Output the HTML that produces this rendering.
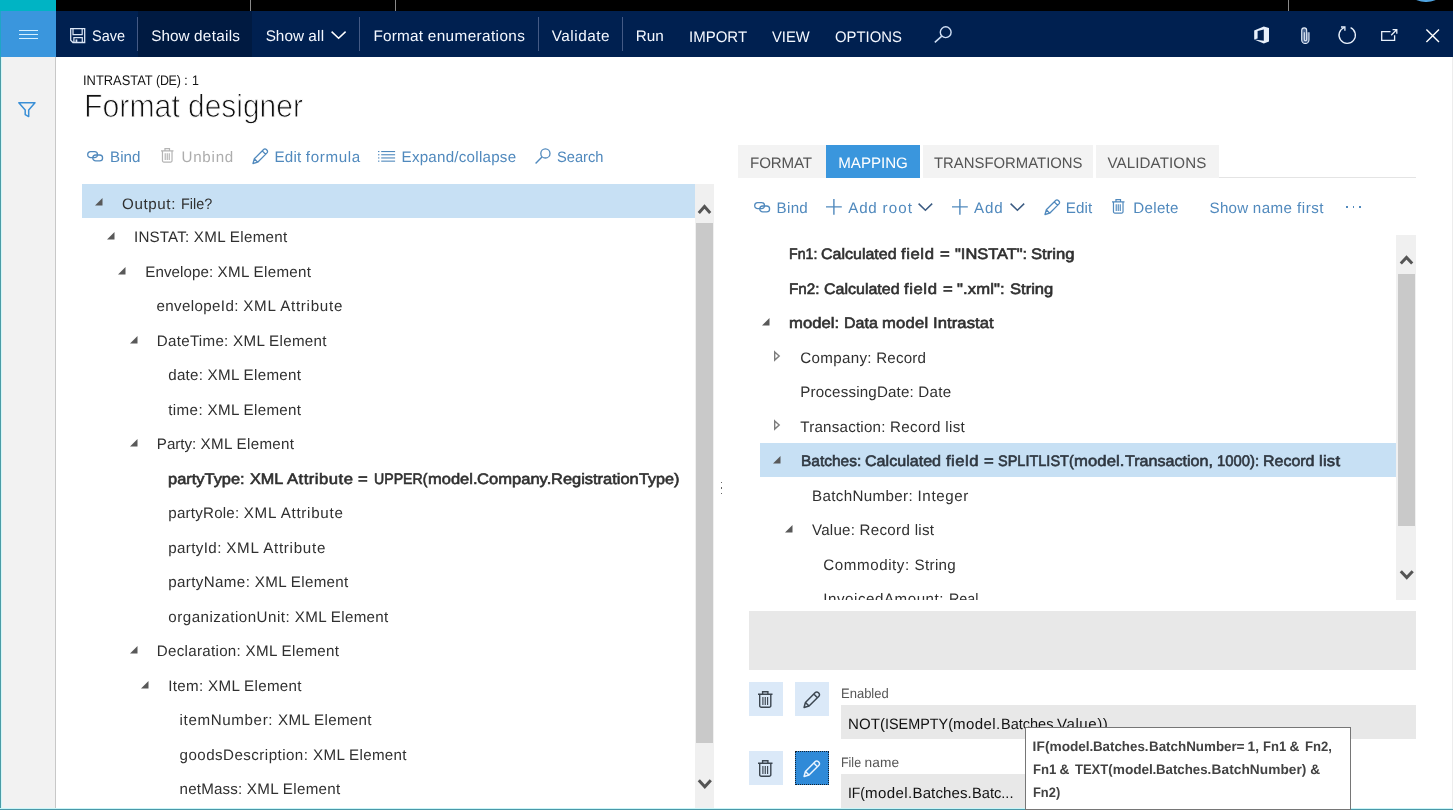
<!DOCTYPE html>
<html><head><meta charset="utf-8"><title>Format designer</title><style>
html,body{margin:0;padding:0;background:#fff;}
body{width:1453px;height:810px;position:relative;overflow:hidden;font-family:"Liberation Sans", sans-serif;}
.t{position:absolute;white-space:pre;text-rendering:geometricPrecision;}
.b{position:absolute;}
svg{position:absolute;overflow:visible;}
</style></head><body>
<div id="app" style="position:absolute;left:0;top:0;width:1453px;height:810px;will-change:transform;">
<div class="b" style="left:0px;top:0px;width:1453px;height:11px;background:#000;"></div>
<div class="b" style="left:0px;top:0px;width:56px;height:11px;background:#00b4c4;"></div>
<div class="b" style="left:250px;top:0px;width:1px;height:11px;background:#8a8a8a;"></div>
<div class="b" style="left:394.5px;top:0px;width:1px;height:11px;background:#8a8a8a;"></div>
<div class="b" style="left:1287.6px;top:0px;width:1px;height:11px;background:#8a8a8a;"></div>
<div class="b" style="left:1403.4px;top:-43.2px;width:45.2px;height:45.2px;border-radius:50%;background:#4fa3e0;"></div>
<div class="b" style="left:56px;top:11px;width:1397px;height:45.5px;background:#002050;"></div>
<div class="b" style="left:138px;top:11px;width:114px;height:45.5px;background:#001a41;"></div>
<div class="b" style="left:0px;top:11px;width:56px;height:45.5px;background:#3a96dd;"></div>
<div class="b" style="left:0px;top:56.5px;width:56px;height:754px;background:#f2f2f2;"></div>
<div class="b" style="left:55px;top:56.5px;width:1px;height:754px;background:#c8c8c8;"></div>
<div class="b" style="left:0px;top:11px;width:1px;height:45.5px;background:#1fa6c6;"></div>
<div class="b" style="left:0px;top:56.5px;width:1px;height:754px;background:#4b9ca6;"></div>
<div class="b" style="left:1px;top:56.5px;width:1.3px;height:754px;background:#d3f7f9;"></div>
<div class="b" style="left:1451.5px;top:56.5px;width:1px;height:752px;background:#ededed;"></div>
<div class="b" style="left:19px;top:30px;width:19px;height:1.2px;background:#d6f0ff;"></div>
<div class="b" style="left:19px;top:34px;width:19px;height:1.2px;background:#d6f0ff;"></div>
<div class="b" style="left:19px;top:38px;width:19px;height:1.2px;background:#d6f0ff;"></div>
<div class="b" style="left:137.2px;top:17px;width:1.2px;height:34px;background:#445a85;"></div>
<div class="b" style="left:359.3px;top:17px;width:1.2px;height:34px;background:#445a85;"></div>
<div class="b" style="left:538px;top:17px;width:1.2px;height:34px;background:#445a85;"></div>
<div class="b" style="left:622px;top:17px;width:1.2px;height:34px;background:#445a85;"></div>
<svg style="left:70px;top:27.6px;" width="15.4" height="15.2" viewBox="0 0 15.4 15.2"><path d="M0.7 0.7H14.7V14.5H2.9L0.7 12.3Z" fill="none" stroke="#dbe6f6" stroke-width="1.3"/>
<path d="M3 0.7V6.6H12.2V0.7" fill="none" stroke="#dbe6f6" stroke-width="1.2"/>
<path d="M3.9 14.5V9.6H12.3V14.5" fill="none" stroke="#dbe6f6" stroke-width="1.2"/>
<rect x="5.6" y="11.4" width="1.7" height="2.6" fill="#dbe6f6"/></svg>
<svg style="left:331px;top:31px;" width="15.3" height="8" viewBox="0 0 15.3 8"><path d="M0.6 0.6l7 6.6l7-6.6" fill="none" stroke="#fff" stroke-width="1.5"/></svg>
<svg style="left:934px;top:26px;" width="18" height="17" viewBox="0 0 18 17"><circle cx="11.7" cy="6.2" r="5.4" fill="none" stroke="#cfdff5" stroke-width="1.4"/><path d="M7.8 10.1L0.8 16.4" stroke="#cfdff5" stroke-width="1.5"/></svg>
<svg style="left:1254.2px;top:26.4px;" width="15" height="17.6" viewBox="0 0 15 17.6"><path d="M0.2 4.4L9.8 0.6L15 2V15.6L9.8 17.4L0.2 13.6L9.8 14.8V3.4L3.6 5V12.4L0.2 13.6Z" fill="#e8f0fb"/></svg>
<svg style="left:1300.6px;top:26.8px;" width="8.7" height="17.2" viewBox="0 0 8.7 17.2"><g transform="translate(8.7 0) scale(-1 1)"><path d="M0.7 5.2V12.9a3.65 3.65 0 0 0 7.3 0V3.4a2.5 2.5 0 0 0-5 0V12.6a1.2 1.2 0 0 0 2.4 0V5.2" fill="#8fa6c8" fill-opacity="0.55" stroke="#e8f0fb" stroke-width="1.1"/></g></svg>
<svg style="left:1337.8px;top:26.4px;" width="18.2" height="17.6" viewBox="0 0 18.2 17.6"><path d="M12.6 1.7A8.2 8.2 0 1 1 6.3 1.5" fill="none" stroke="#e8f0fb" stroke-width="1.3"/><path d="M3 1H6.9V4.7" fill="none" stroke="#e8f0fb" stroke-width="1.3"/></svg>
<svg style="left:1380.8px;top:28.9px;" width="16.5" height="12" viewBox="0 0 16.5 12"><path d="M9.5 2.7H0.7V11.3H13.6V6.3" fill="none" stroke="#e8f0fb" stroke-width="1.3"/><path d="M10.2 6.2L15.6 0.8M11.6 0.7H15.8V4.8" fill="none" stroke="#e8f0fb" stroke-width="1.3"/></svg>
<svg style="left:1425.6px;top:28.9px;" width="13.4" height="13.4" viewBox="0 0 13.4 13.4"><path d="M0.4 0.4L13 13M13 0.4L0.4 13" stroke="#fff" stroke-width="1.4"/></svg>
<svg style="left:18px;top:101.8px;" width="17.8" height="15.4" viewBox="0 0 17.8 15.4"><path d="M0.8 0.8H17L10.7 8V14.6L7.2 12.6V8Z" fill="none" stroke="#3a8fd6" stroke-width="1.5" stroke-linejoin="round"/></svg>
<svg style="left:86.5px;top:150.7px;" width="16.3" height="10.6" viewBox="0 0 16.3 10.6"><rect x="0.7" y="0.7" width="9.8" height="5.9" rx="2.95" fill="none" stroke="#5089bd" stroke-width="1.3"/><rect x="5.8" y="4" width="9.8" height="5.9" rx="2.95" fill="none" stroke="#5089bd" stroke-width="1.3"/></svg>
<svg style="left:161px;top:148.4px;" width="12.499" height="14.654" viewBox="0 0 12.499 14.654"><g transform="scale(0.862)"><path d="M0 3.3H14.5M4.6 3.1V0.8H9.9V3.1M1.7 3.5V14.7a1.6 1.6 0 0 0 1.6 1.6H11.2a1.6 1.6 0 0 0 1.6-1.6V3.5" fill="none" stroke="#b4b4b4" stroke-width="1.3921113689095128"/><path d="M4.9 6V14M7.25 6V14M9.6 6V14" stroke="#b4b4b4" stroke-width="1.334106728538283"/></g></svg>
<svg style="left:251.9px;top:147.8px;" width="16.5" height="16.5" viewBox="0 0 16.5 16.5"><g transform="scale(1.0)"><path d="M1 15.5L2.3 10.8L11.6 1.5a1.9 1.9 0 0 1 2.7 0l0.7 0.7a1.9 1.9 0 0 1 0 2.7L5.7 14.2Z M2.3 10.8L5.7 14.2 M10.2 2.9L13.6 6.3" fill="none" stroke="#5089bd" stroke-width="1.3" stroke-linejoin="round"/></g></svg>
<svg style="left:377.9px;top:150.5px;" width="17.1" height="11" viewBox="0 0 17.1 11"><rect x="0" y="0" width="1.4" height="1.1" fill="#5089bd"/><rect x="3.2" y="0" width="13.9" height="1.1" fill="#5089bd"/><rect x="0" y="3.2" width="1.4" height="1.1" fill="#5089bd"/><rect x="3.2" y="3.2" width="13.9" height="1.1" fill="#5089bd"/><rect x="0" y="6.4" width="1.4" height="1.1" fill="#5089bd"/><rect x="3.2" y="6.4" width="13.9" height="1.1" fill="#5089bd"/><rect x="0" y="9.6" width="1.4" height="1.1" fill="#5089bd"/><rect x="3.2" y="9.6" width="13.9" height="1.1" fill="#5089bd"/></svg>
<svg style="left:534.8px;top:147.8px;" width="16" height="16" viewBox="0 0 16 16"><circle cx="10.4" cy="5.4" r="4.6" fill="none" stroke="#5089bd" stroke-width="1.3"/><path d="M7.2 8.8L0.6 15.4" stroke="#5089bd" stroke-width="1.4"/></svg>
<div class="b" style="left:82px;top:184px;width:613.2px;height:33.6px;background:#c7e0f4;"></div>
<div class="b" style="left:695.2px;top:184px;width:18.8px;height:624px;background:#f0f0f0;"></div>
<div class="b" style="left:696.2px;top:223px;width:17px;height:520px;background:#c9c9c9;"></div>
<svg style="left:698px;top:203.5px;" width="13" height="10" viewBox="0 0 13 10"><path d="M0.8 9L6.5 2.6L12.2 9" fill="none" stroke="#555" stroke-width="3" stroke-linejoin="miter"/></svg>
<svg style="left:697.8px;top:778.7px;" width="13.6" height="10.3" viewBox="0 0 13.6 10.3"><path d="M0.8 1.2L6.8 7.8L12.8 1.2" fill="none" stroke="#555" stroke-width="3"/></svg>
<div class="b" style="left:720.6px;top:481.8px;width:1.5px;height:1.5px;background:#666;"></div>
<div class="b" style="left:720.6px;top:487.3px;width:1.5px;height:1.5px;background:#666;"></div>
<div class="b" style="left:720.6px;top:492.8px;width:1.5px;height:1.5px;background:#666;"></div>
<div class="b" style="left:738px;top:145px;width:87.5px;height:32.5px;background:#f3f3f3;"></div>
<div class="b" style="left:826.2px;top:145px;width:93.8px;height:32.5px;background:#3a96dd;"></div>
<div class="b" style="left:923px;top:145px;width:170.3px;height:32.5px;background:#f3f3f3;"></div>
<div class="b" style="left:1096px;top:145px;width:122.5px;height:32.5px;background:#f3f3f3;"></div>
<div class="b" style="left:1218.5px;top:176.5px;width:197.7px;height:1px;background:#e4e4e4;"></div>
<svg style="left:753.5px;top:201.6px;" width="16.3" height="10.6" viewBox="0 0 16.3 10.6"><rect x="0.7" y="0.7" width="9.8" height="5.9" rx="2.95" fill="none" stroke="#5089bd" stroke-width="1.3"/><rect x="5.8" y="4" width="9.8" height="5.9" rx="2.95" fill="none" stroke="#5089bd" stroke-width="1.3"/></svg>
<svg style="left:826.2px;top:198.6px;" width="15.8" height="15.8" viewBox="0 0 15.8 15.8"><path d="M7.9 0V15.8M0 7.9H15.8" stroke="#5089bd" stroke-width="1.4"/></svg>
<svg style="left:918.2px;top:202.5px;" width="14.8" height="8.3" viewBox="0 0 14.8 8.3"><path d="M0.6 0.6L7.4 7.2L14.2 0.6" fill="none" stroke="#3b5b82" stroke-width="1.5"/></svg>
<svg style="left:952.4px;top:198.6px;" width="15.8" height="15.8" viewBox="0 0 15.8 15.8"><path d="M7.9 0V15.8M0 7.9H15.8" stroke="#5089bd" stroke-width="1.4"/></svg>
<svg style="left:1010px;top:202.5px;" width="14.8" height="8.3" viewBox="0 0 14.8 8.3"><path d="M0.6 0.6L7.4 7.2L14.2 0.6" fill="none" stroke="#3b5b82" stroke-width="1.5"/></svg>
<svg style="left:1043.7px;top:198.6px;" width="16.5" height="16.5" viewBox="0 0 16.5 16.5"><g transform="scale(1.0)"><path d="M1 15.5L2.3 10.8L11.6 1.5a1.9 1.9 0 0 1 2.7 0l0.7 0.7a1.9 1.9 0 0 1 0 2.7L5.7 14.2Z M2.3 10.8L5.7 14.2 M10.2 2.9L13.6 6.3" fill="none" stroke="#5089bd" stroke-width="1.3" stroke-linejoin="round"/></g></svg>
<svg style="left:1112px;top:199.2px;" width="12.499" height="14.654" viewBox="0 0 12.499 14.654"><g transform="scale(0.862)"><path d="M0 3.3H14.5M4.6 3.1V0.8H9.9V3.1M1.7 3.5V14.7a1.6 1.6 0 0 0 1.6 1.6H11.2a1.6 1.6 0 0 0 1.6-1.6V3.5" fill="none" stroke="#5089bd" stroke-width="1.3921113689095128"/><path d="M4.9 6V14M7.25 6V14M9.6 6V14" stroke="#5089bd" stroke-width="1.334106728538283"/></g></svg>
<div class="b" style="left:1346.0px;top:206px;width:1.8px;height:1.8px;background:#5089bd;"></div>
<div class="b" style="left:1352.6px;top:206px;width:1.8px;height:1.8px;background:#5089bd;"></div>
<div class="b" style="left:1359.2px;top:206px;width:1.8px;height:1.8px;background:#5089bd;"></div>
<div class="b" style="left:749px;top:235px;width:647.3px;height:365px;overflow:hidden;">
<div class="b" style="left:11px;top:207.5px;width:637px;height:34px;background:#c7e0f4;"></div>
<span class="t" style="left:40.05px;top:10.00px;font-size:15.15px;line-height:20px;color:#303030;-webkit-text-stroke:0.6px currentColor;transform:scaleX(0.9344);transform-origin:0 0;">Fn1: </span>
<span class="t" style="left:72.30px;top:10.00px;font-size:15.15px;line-height:20px;color:#303030;-webkit-text-stroke:0.6px currentColor;transform:scaleX(1.0561);transform-origin:0 0;">Calculated </span>
<span class="t" style="left:152.30px;top:10.00px;font-size:15.15px;line-height:20px;color:#303030;letter-spacing:0.540px;-webkit-text-stroke:0.6px currentColor;transform:scaleX(1.1000);transform-origin:0 0;">field </span>
<span class="t" style="left:191.05px;top:10.00px;font-size:15.15px;line-height:20px;color:#303030;letter-spacing:0.060px;-webkit-text-stroke:0.6px currentColor;transform:scaleX(1.1000);transform-origin:0 0;">= </span>
<span class="t" style="left:205.55px;top:10.00px;font-size:15.15px;line-height:20px;color:#303030;-webkit-text-stroke:0.6px currentColor;transform:scaleX(1.0848);transform-origin:0 0;">"INSTAT": </span>
<span class="t" style="left:282.30px;top:10.00px;font-size:15.15px;line-height:20px;color:#303030;-webkit-text-stroke:0.6px currentColor;transform:scaleX(1.0997);transform-origin:0 0;">String</span>
<span class="t" style="left:40.05px;top:45.00px;font-size:15.15px;line-height:20px;color:#303030;-webkit-text-stroke:0.6px currentColor;transform:scaleX(1.0068);transform-origin:0 0;">Fn2: </span>
<span class="t" style="left:74.80px;top:45.00px;font-size:15.15px;line-height:20px;color:#303030;-webkit-text-stroke:0.6px currentColor;transform:scaleX(1.0561);transform-origin:0 0;">Calculated </span>
<span class="t" style="left:154.80px;top:45.00px;font-size:15.15px;line-height:20px;color:#303030;letter-spacing:0.540px;-webkit-text-stroke:0.6px currentColor;transform:scaleX(1.1000);transform-origin:0 0;">field </span>
<span class="t" style="left:193.55px;top:45.00px;font-size:15.15px;line-height:20px;color:#303030;letter-spacing:0.060px;-webkit-text-stroke:0.6px currentColor;transform:scaleX(1.1000);transform-origin:0 0;">= </span>
<span class="t" style="left:208.05px;top:45.00px;font-size:15.15px;line-height:20px;color:#303030;letter-spacing:0.101px;-webkit-text-stroke:0.6px currentColor;transform:scaleX(1.1000);transform-origin:0 0;">".xml": </span>
<span class="t" style="left:260.55px;top:45.00px;font-size:15.15px;line-height:20px;color:#303030;letter-spacing:-0.000px;-webkit-text-stroke:0.6px currentColor;transform:scaleX(1.0934);transform-origin:0 0;">String</span>
<span class="t" style="left:40.05px;top:79.00px;font-size:15.15px;line-height:20px;color:#303030;letter-spacing:0.017px;-webkit-text-stroke:0.6px currentColor;transform:scaleX(1.1000);transform-origin:0 0;">model: </span>
<span class="t" style="left:94.80px;top:79.00px;font-size:15.15px;line-height:20px;color:#303030;-webkit-text-stroke:0.6px currentColor;transform:scaleX(1.0565);transform-origin:0 0;">Data </span>
<span class="t" style="left:133.05px;top:79.00px;font-size:15.15px;line-height:20px;color:#303030;letter-spacing:0.190px;-webkit-text-stroke:0.6px currentColor;transform:scaleX(1.1000);transform-origin:0 0;">model </span>
<span class="t" style="left:184.30px;top:79.00px;font-size:15.15px;line-height:20px;color:#303030;letter-spacing:0.066px;-webkit-text-stroke:0.6px currentColor;transform:scaleX(1.1000);transform-origin:0 0;">Intrastat</span>
<span class="t" style="left:51.30px;top:114.00px;font-size:15.15px;line-height:20px;color:#303030;letter-spacing:0.309px;">Company: </span>
<span class="t" style="left:127.30px;top:114.00px;font-size:15.15px;line-height:20px;color:#303030;letter-spacing:0.139px;">Record</span>
<span class="t" style="left:51.30px;top:148.00px;font-size:15.15px;line-height:20px;color:#303030;letter-spacing:0.169px;">ProcessingDate: </span>
<span class="t" style="left:169.30px;top:148.00px;font-size:15.15px;line-height:20px;color:#303030;letter-spacing:0.258px;">Date</span>
<span class="t" style="left:51.30px;top:183.00px;font-size:15.15px;line-height:20px;color:#303030;letter-spacing:0.214px;">Transaction: </span>
<span class="t" style="left:141.05px;top:183.00px;font-size:15.15px;line-height:20px;color:#303030;letter-spacing:0.323px;">Record list</span>
<span class="t" style="left:51.80px;top:217.00px;font-size:15.15px;line-height:20px;color:#2f3740;-webkit-text-stroke:0.6px currentColor;transform:scaleX(1.0218);transform-origin:0 0;">Batches: </span>
<span class="t" style="left:116.30px;top:217.00px;font-size:15.15px;line-height:20px;color:#2f3740;-webkit-text-stroke:0.6px currentColor;transform:scaleX(1.0627);transform-origin:0 0;">Calculated </span>
<span class="t" style="left:196.80px;top:217.00px;font-size:15.15px;line-height:20px;color:#2f3740;letter-spacing:0.427px;-webkit-text-stroke:0.6px currentColor;transform:scaleX(1.1000);transform-origin:0 0;">field </span>
<span class="t" style="left:234.80px;top:217.00px;font-size:15.15px;line-height:20px;color:#2f3740;letter-spacing:0.060px;-webkit-text-stroke:0.6px currentColor;transform:scaleX(1.1000);transform-origin:0 0;">= </span>
<span class="t" style="left:249.30px;top:217.00px;font-size:15.15px;line-height:20px;color:#2f3740;-webkit-text-stroke:0.6px currentColor;transform:scaleX(0.9577);transform-origin:0 0;">SPLITLIST(</span>
<span class="t" style="left:325.05px;top:217.00px;font-size:15.15px;line-height:20px;color:#2f3740;letter-spacing:0.076px;-webkit-text-stroke:0.6px currentColor;transform:scaleX(1.1000);transform-origin:0 0;">model.</span>
<span class="t" style="left:375.55px;top:217.00px;font-size:15.15px;line-height:20px;color:#2f3740;letter-spacing:-0.000px;-webkit-text-stroke:0.6px currentColor;transform:scaleX(1.0636);transform-origin:0 0;">Transaction, </span>
<span class="t" style="left:468.05px;top:217.00px;font-size:15.15px;line-height:20px;color:#2f3740;-webkit-text-stroke:0.6px currentColor;transform:scaleX(0.9811);transform-origin:0 0;">1000): </span>
<span class="t" style="left:514.30px;top:217.00px;font-size:15.15px;line-height:20px;color:#2f3740;-webkit-text-stroke:0.6px currentColor;transform:scaleX(1.0553);transform-origin:0 0;">Record </span>
<span class="t" style="left:570.25px;top:217.00px;font-size:15.15px;line-height:20px;color:#2f3740;letter-spacing:0.209px;-webkit-text-stroke:0.6px currentColor;transform:scaleX(1.1000);transform-origin:0 0;">list</span>
<span class="t" style="left:63.05px;top:252.00px;font-size:15.15px;line-height:20px;color:#303030;letter-spacing:0.347px;">BatchNumber: </span>
<span class="t" style="left:168.55px;top:252.00px;font-size:15.15px;line-height:20px;color:#303030;letter-spacing:0.603px;">Integer</span>
<span class="t" style="left:63.05px;top:286.00px;font-size:15.15px;line-height:20px;color:#303030;letter-spacing:0.212px;">Value: </span>
<span class="t" style="left:110.55px;top:286.00px;font-size:15.15px;line-height:20px;color:#303030;letter-spacing:0.298px;">Record list</span>
<span class="t" style="left:74.30px;top:321.00px;font-size:15.15px;line-height:20px;color:#303030;letter-spacing:0.570px;">Commodity: </span>
<span class="t" style="left:165.55px;top:321.00px;font-size:15.15px;line-height:20px;color:#303030;letter-spacing:0.339px;">String</span>
<span class="t" style="left:74.30px;top:355.00px;font-size:15.15px;line-height:20px;color:#303030;letter-spacing:0.531px;">InvoicedAmount: </span>
<span class="t" style="left:199.80px;top:355.00px;font-size:15.15px;line-height:20px;color:#303030;transform:scaleX(0.9476);transform-origin:0 0;">Real</span>
</div>
<div class="b" style="left:1396.2px;top:235px;width:20px;height:365px;background:#f0f0f0;"></div>
<div class="b" style="left:1398.2px;top:274px;width:17.3px;height:252.3px;background:#c9c9c9;"></div>
<svg style="left:1399.6px;top:254.8px;" width="13" height="9.6" viewBox="0 0 13 9.6"><path d="M0.8 8.6L6.5 2.4L12.2 8.6" fill="none" stroke="#555" stroke-width="3"/></svg>
<svg style="left:1399.5px;top:570px;" width="13.5" height="10" viewBox="0 0 13.5 10"><path d="M0.8 1.2L6.75 7.6L12.7 1.2" fill="none" stroke="#555" stroke-width="3"/></svg>
<svg style="left:95.2px;top:198.0px;" width="7.5" height="7.5" viewBox="0 0 7.5 7.5"><path d="M7.5 0V7.5H0Z" fill="#595959"/></svg>
<svg style="left:107.2px;top:232.0px;" width="7.5" height="7.5" viewBox="0 0 7.5 7.5"><path d="M7.5 0V7.5H0Z" fill="#595959"/></svg>
<svg style="left:118.45px;top:267.0px;" width="7.5" height="7.5" viewBox="0 0 7.5 7.5"><path d="M7.5 0V7.5H0Z" fill="#595959"/></svg>
<svg style="left:129.95px;top:336.0px;" width="7.5" height="7.5" viewBox="0 0 7.5 7.5"><path d="M7.5 0V7.5H0Z" fill="#595959"/></svg>
<svg style="left:129.95px;top:439.0px;" width="7.5" height="7.5" viewBox="0 0 7.5 7.5"><path d="M7.5 0V7.5H0Z" fill="#595959"/></svg>
<svg style="left:129.95px;top:646.0px;" width="7.5" height="7.5" viewBox="0 0 7.5 7.5"><path d="M7.5 0V7.5H0Z" fill="#595959"/></svg>
<svg style="left:141.45px;top:681.0px;" width="7.5" height="7.5" viewBox="0 0 7.5 7.5"><path d="M7.5 0V7.5H0Z" fill="#595959"/></svg>
<svg style="left:762.2px;top:318.0px;" width="7.5" height="7.5" viewBox="0 0 7.5 7.5"><path d="M7.5 0V7.5H0Z" fill="#595959"/></svg>
<svg style="left:774.25px;top:350.9px;" width="6" height="10" viewBox="0 0 6 10"><path d="M0.7 0.9L5.2 5L0.7 9.1Z" fill="none" stroke="#7c7c7c" stroke-width="1.4"/></svg>
<svg style="left:774.25px;top:419.9px;" width="6" height="10" viewBox="0 0 6 10"><path d="M0.7 0.9L5.2 5L0.7 9.1Z" fill="none" stroke="#7c7c7c" stroke-width="1.4"/></svg>
<svg style="left:773.45px;top:456.0px;" width="7.5" height="7.5" viewBox="0 0 7.5 7.5"><path d="M7.5 0V7.5H0Z" fill="#595959"/></svg>
<svg style="left:785.2px;top:525.0px;" width="7.5" height="7.5" viewBox="0 0 7.5 7.5"><path d="M7.5 0V7.5H0Z" fill="#595959"/></svg>
<div class="b" style="left:749px;top:611px;width:667.3px;height:58.6px;background:#e8e8e8;"></div>
<div class="b" style="left:749px;top:682px;width:34px;height:34px;background:#dbe9f8;"></div>
<div class="b" style="left:795px;top:682px;width:34px;height:34px;background:#dbe9f8;"></div>
<div class="b" style="left:749px;top:751px;width:34px;height:34px;background:#dbe9f8;"></div>
<div class="b" style="left:795px;top:751px;width:34px;height:34px;background:#2f8ad8;outline:1px dotted #123;outline-offset:-1px;"></div>
<svg style="left:757.9px;top:690.9px;" width="14.5" height="17.0" viewBox="0 0 14.5 17.0"><g transform="scale(1.0)"><path d="M0 3.3H14.5M4.6 3.1V0.8H9.9V3.1M1.7 3.5V14.7a1.6 1.6 0 0 0 1.6 1.6H11.2a1.6 1.6 0 0 0 1.6-1.6V3.5" fill="none" stroke="#3c4650" stroke-width="1.4"/><path d="M4.9 6V14M7.25 6V14M9.6 6V14" stroke="#3c4650" stroke-width="1.15"/></g></svg>
<svg style="left:802.9px;top:690.8px;" width="17.490000000000002" height="17.490000000000002" viewBox="0 0 17.490000000000002 17.490000000000002"><g transform="scale(1.06)"><path d="M1 15.5L2.3 10.8L11.6 1.5a1.9 1.9 0 0 1 2.7 0l0.7 0.7a1.9 1.9 0 0 1 0 2.7L5.7 14.2Z M2.3 10.8L5.7 14.2 M10.2 2.9L13.6 6.3" fill="none" stroke="#3c4650" stroke-width="1.4150943396226414" stroke-linejoin="round"/></g></svg>
<svg style="left:757.9px;top:759.9px;" width="14.5" height="17.0" viewBox="0 0 14.5 17.0"><g transform="scale(1.0)"><path d="M0 3.3H14.5M4.6 3.1V0.8H9.9V3.1M1.7 3.5V14.7a1.6 1.6 0 0 0 1.6 1.6H11.2a1.6 1.6 0 0 0 1.6-1.6V3.5" fill="none" stroke="#3c4650" stroke-width="1.4"/><path d="M4.9 6V14M7.25 6V14M9.6 6V14" stroke="#3c4650" stroke-width="1.15"/></g></svg>
<svg style="left:802.9px;top:759.8px;" width="17.490000000000002" height="17.490000000000002" viewBox="0 0 17.490000000000002 17.490000000000002"><g transform="scale(1.06)"><path d="M1 15.5L2.3 10.8L11.6 1.5a1.9 1.9 0 0 1 2.7 0l0.7 0.7a1.9 1.9 0 0 1 0 2.7L5.7 14.2Z M2.3 10.8L5.7 14.2 M10.2 2.9L13.6 6.3" fill="none" stroke="#eaf4ff" stroke-width="1.4150943396226414" stroke-linejoin="round"/></g></svg>
<div class="b" style="left:841px;top:705px;width:575.3px;height:33.6px;background:#e8e8e8;"></div>
<div class="b" style="left:841px;top:774.3px;width:184.5px;height:34px;background:#e8e8e8;"></div>
<span class="t" style="left:91.74px;top:27.00px;font-size:15.3px;line-height:20px;color:#f4f8ff;transform:scaleX(0.9452);transform-origin:0 0;">Save</span>
<span class="t" style="left:151.14px;top:27.00px;font-size:15.3px;line-height:20px;color:#f4f8ff;letter-spacing:0.077px;">Show </span>
<span class="t" style="left:194.04px;top:27.00px;font-size:15.3px;line-height:20px;color:#f4f8ff;letter-spacing:0.291px;">details</span>
<span class="t" style="left:265.64px;top:27.00px;font-size:15.3px;line-height:20px;color:#f4f8ff;letter-spacing:0.037px;">Show </span>
<span class="t" style="left:308.34px;top:27.00px;font-size:15.3px;line-height:20px;color:#f4f8ff;letter-spacing:0.276px;">all</span>
<span class="t" style="left:373.54px;top:27.00px;font-size:15.3px;line-height:20px;color:#f4f8ff;letter-spacing:0.214px;">Format </span>
<span class="t" style="left:427.74px;top:27.00px;font-size:15.3px;line-height:20px;color:#f4f8ff;letter-spacing:0.407px;">enumerations</span>
<span class="t" style="left:551.74px;top:27.00px;font-size:15.3px;line-height:20px;color:#f4f8ff;letter-spacing:0.516px;">Validate</span>
<span class="t" style="left:635.74px;top:27.00px;font-size:15.3px;line-height:20px;color:#f4f8ff;letter-spacing:-0.049px;">Run</span>
<span class="t" style="left:688.54px;top:28.00px;font-size:15.3px;line-height:20px;color:#f4f8ff;transform:scaleX(0.9805);transform-origin:0 0;">IMPORT</span>
<span class="t" style="left:771.64px;top:28.00px;font-size:15.3px;line-height:20px;color:#f4f8ff;transform:scaleX(0.9635);transform-origin:0 0;">VIEW</span>
<span class="t" style="left:834.74px;top:28.00px;font-size:15.3px;line-height:20px;color:#f4f8ff;transform:scaleX(0.9713);transform-origin:0 0;">OPTIONS</span>
<span class="t" style="left:83.34px;top:71.00px;font-size:13.8px;line-height:20px;color:#151515;transform:scaleX(0.9337);transform-origin:0 0;">INTRASTAT </span>
<span class="t" style="left:156.34px;top:71.00px;font-size:13.8px;line-height:20px;color:#151515;letter-spacing:-0.274px;transform:scaleX(0.9000);transform-origin:0 0;">(DE) </span>
<span class="t" style="left:184.09px;top:71.00px;font-size:13.8px;line-height:20px;color:#151515;letter-spacing:0.164px;">: </span>
<span class="t" style="left:192.09px;top:71.00px;font-size:13.8px;line-height:20px;color:#151515;transform:scaleX(0.9000);transform-origin:0 0;">1</span>
<span class="t" style="left:83.53px;top:86.00px;font-size:32.5px;line-height:40px;color:#111;-webkit-text-stroke:0.9px #fff;transform:scaleX(0.9311);transform-origin:0 0;">Format </span>
<span class="t" style="left:187.78px;top:86.00px;font-size:32.5px;line-height:40px;color:#111;-webkit-text-stroke:0.9px #fff;transform:scaleX(0.9214);transform-origin:0 0;">designer</span>
<span class="t" style="left:110.05px;top:148.00px;font-size:15.15px;line-height:20px;color:#5089bd;letter-spacing:0.048px;">Bind</span>
<span class="t" style="left:181.55px;top:148.00px;font-size:15.15px;line-height:20px;color:#adadad;letter-spacing:0.735px;">Unbind</span>
<span class="t" style="left:274.55px;top:148.00px;font-size:15.15px;line-height:20px;color:#5089bd;letter-spacing:0.191px;">Edit </span>
<span class="t" style="left:305.80px;top:148.00px;font-size:15.15px;line-height:20px;color:#5089bd;letter-spacing:0.668px;">formula</span>
<span class="t" style="left:401.55px;top:148.00px;font-size:15.15px;line-height:20px;color:#5089bd;letter-spacing:0.243px;">Expand/collapse</span>
<span class="t" style="left:557.05px;top:148.00px;font-size:15.15px;line-height:20px;color:#5089bd;transform:scaleX(0.9692);transform-origin:0 0;">Search</span>
<span class="t" style="left:122.05px;top:195.00px;font-size:15.15px;line-height:20px;color:#303030;letter-spacing:0.609px;">Output: </span>
<span class="t" style="left:180.80px;top:195.00px;font-size:15.15px;line-height:20px;color:#303030;transform:scaleX(0.9522);transform-origin:0 0;">File?</span>
<span class="t" style="left:134.05px;top:228.00px;font-size:15.15px;line-height:20px;color:#303030;letter-spacing:0.178px;">INSTAT: </span>
<span class="t" style="left:193.80px;top:228.00px;font-size:15.15px;line-height:20px;color:#303030;letter-spacing:0.318px;">XML Element</span>
<span class="t" style="left:145.30px;top:263.00px;font-size:15.15px;line-height:20px;color:#303030;letter-spacing:0.069px;">Envelope: </span>
<span class="t" style="left:217.55px;top:263.00px;font-size:15.15px;line-height:20px;color:#303030;letter-spacing:0.318px;">XML Element</span>
<span class="t" style="left:156.55px;top:297.00px;font-size:15.15px;line-height:20px;color:#303030;letter-spacing:0.354px;">envelopeId: </span>
<span class="t" style="left:243.30px;top:297.00px;font-size:15.15px;line-height:20px;color:#303030;letter-spacing:0.723px;">XML Attribute</span>
<span class="t" style="left:156.80px;top:332.00px;font-size:15.15px;line-height:20px;color:#303030;letter-spacing:0.277px;">DateTime: </span>
<span class="t" style="left:233.05px;top:332.00px;font-size:15.15px;line-height:20px;color:#303030;letter-spacing:0.318px;">XML Element</span>
<span class="t" style="left:168.30px;top:366.00px;font-size:15.15px;line-height:20px;color:#303030;letter-spacing:0.227px;">date: </span>
<span class="t" style="left:207.55px;top:366.00px;font-size:15.15px;line-height:20px;color:#303030;letter-spacing:0.318px;">XML Element</span>
<span class="t" style="left:168.30px;top:401.00px;font-size:15.15px;line-height:20px;color:#303030;letter-spacing:0.370px;">time: </span>
<span class="t" style="left:207.55px;top:401.00px;font-size:15.15px;line-height:20px;color:#303030;letter-spacing:0.318px;">XML Element</span>
<span class="t" style="left:156.80px;top:435.00px;font-size:15.15px;line-height:20px;color:#303030;letter-spacing:-0.002px;">Party: </span>
<span class="t" style="left:200.55px;top:435.00px;font-size:15.15px;line-height:20px;color:#303030;letter-spacing:0.318px;">XML Element</span>
<span class="t" style="left:168.30px;top:470.00px;font-size:15.15px;line-height:20px;color:#303030;-webkit-text-stroke:0.6px currentColor;transform:scaleX(1.0847);transform-origin:0 0;">partyType: </span>
<span class="t" style="left:249.55px;top:470.00px;font-size:15.15px;line-height:20px;color:#303030;-webkit-text-stroke:0.6px currentColor;transform:scaleX(1.0695);transform-origin:0 0;">XML </span>
<span class="t" style="left:286.75px;top:470.00px;font-size:15.15px;line-height:20px;color:#303030;letter-spacing:0.445px;-webkit-text-stroke:0.6px currentColor;transform:scaleX(1.1000);transform-origin:0 0;">Attribute </span>
<span class="t" style="left:358.30px;top:470.00px;font-size:15.15px;line-height:20px;color:#303030;letter-spacing:0.628px;-webkit-text-stroke:0.6px currentColor;transform:scaleX(1.1000);transform-origin:0 0;">= </span>
<span class="t" style="left:374.05px;top:470.00px;font-size:15.15px;line-height:20px;color:#303030;-webkit-text-stroke:0.6px currentColor;transform:scaleX(0.9350);transform-origin:0 0;">UPPER(</span>
<span class="t" style="left:427.55px;top:470.00px;font-size:15.15px;line-height:20px;color:#303030;letter-spacing:0.000px;-webkit-text-stroke:0.6px currentColor;transform:scaleX(1.0890);transform-origin:0 0;">model.</span>
<span class="t" style="left:477.05px;top:470.00px;font-size:15.15px;line-height:20px;color:#303030;-webkit-text-stroke:0.6px currentColor;transform:scaleX(1.0937);transform-origin:0 0;">Company.</span>
<span class="t" style="left:551.30px;top:470.00px;font-size:15.15px;line-height:20px;color:#303030;-webkit-text-stroke:0.6px currentColor;transform:scaleX(1.0861);transform-origin:0 0;">Registration</span>
<span class="t" style="left:639.05px;top:470.00px;font-size:15.15px;line-height:20px;color:#303030;-webkit-text-stroke:0.6px currentColor;transform:scaleX(1.0695);transform-origin:0 0;">Type)</span>
<span class="t" style="left:168.30px;top:504.00px;font-size:15.15px;line-height:20px;color:#303030;letter-spacing:0.207px;">partyRole: </span>
<span class="t" style="left:243.80px;top:504.00px;font-size:15.15px;line-height:20px;color:#303030;letter-spacing:0.723px;">XML Attribute</span>
<span class="t" style="left:168.30px;top:539.00px;font-size:15.15px;line-height:20px;color:#303030;letter-spacing:0.366px;">partyId: </span>
<span class="t" style="left:226.30px;top:539.00px;font-size:15.15px;line-height:20px;color:#303030;letter-spacing:0.723px;">XML Attribute</span>
<span class="t" style="left:168.30px;top:573.00px;font-size:15.15px;line-height:20px;color:#303030;letter-spacing:0.366px;">partyName: </span>
<span class="t" style="left:254.80px;top:573.00px;font-size:15.15px;line-height:20px;color:#303030;letter-spacing:0.318px;">XML Element</span>
<span class="t" style="left:168.30px;top:608.00px;font-size:15.15px;line-height:20px;color:#303030;letter-spacing:0.482px;">organizationUnit: </span>
<span class="t" style="left:294.80px;top:608.00px;font-size:15.15px;line-height:20px;color:#303030;letter-spacing:0.318px;">XML Element</span>
<span class="t" style="left:156.80px;top:642.00px;font-size:15.15px;line-height:20px;color:#303030;letter-spacing:0.288px;">Declaration: </span>
<span class="t" style="left:245.55px;top:642.00px;font-size:15.15px;line-height:20px;color:#303030;letter-spacing:0.318px;">XML Element</span>
<span class="t" style="left:168.30px;top:677.00px;font-size:15.15px;line-height:20px;color:#303030;letter-spacing:0.315px;">Item: </span>
<span class="t" style="left:208.05px;top:677.00px;font-size:15.15px;line-height:20px;color:#303030;letter-spacing:0.318px;">XML Element</span>
<span class="t" style="left:179.55px;top:711.00px;font-size:15.15px;line-height:20px;color:#303030;letter-spacing:0.635px;">itemNumber: </span>
<span class="t" style="left:278.05px;top:711.00px;font-size:15.15px;line-height:20px;color:#303030;letter-spacing:0.318px;">XML Element</span>
<span class="t" style="left:179.55px;top:746.00px;font-size:15.15px;line-height:20px;color:#303030;letter-spacing:0.450px;">goodsDescription: </span>
<span class="t" style="left:313.05px;top:746.00px;font-size:15.15px;line-height:20px;color:#303030;letter-spacing:0.318px;">XML Element</span>
<span class="t" style="left:179.55px;top:780.00px;font-size:15.15px;line-height:20px;color:#303030;letter-spacing:0.179px;">netMass: </span>
<span class="t" style="left:246.80px;top:780.00px;font-size:15.15px;line-height:20px;color:#303030;letter-spacing:0.318px;">XML Element</span>
<span class="t" style="left:750.05px;top:154.00px;font-size:15.15px;line-height:20px;color:#555;letter-spacing:-0.158px;">FORMAT</span>
<span class="t" style="left:838.30px;top:154.00px;font-size:15.15px;line-height:20px;color:#fff;letter-spacing:-0.053px;">MAPPING</span>
<span class="t" style="left:933.80px;top:154.00px;font-size:15.15px;line-height:20px;color:#555;transform:scaleX(0.9827);transform-origin:0 0;">TRANSFORMATIONS</span>
<span class="t" style="left:1107.55px;top:154.00px;font-size:15.15px;line-height:20px;color:#555;letter-spacing:0.088px;">VALIDATIONS</span>
<span class="t" style="left:776.55px;top:199.00px;font-size:15.15px;line-height:20px;color:#5089bd;letter-spacing:0.315px;">Bind</span>
<span class="t" style="left:848.30px;top:199.00px;font-size:15.15px;line-height:20px;color:#5089bd;letter-spacing:0.773px;">Add </span>
<span class="t" style="left:882.55px;top:199.00px;font-size:15.15px;line-height:20px;color:#5089bd;letter-spacing:1.138px;">root</span>
<span class="t" style="left:974.05px;top:199.00px;font-size:15.15px;line-height:20px;color:#5089bd;letter-spacing:0.902px;">Add</span>
<span class="t" style="left:1065.80px;top:199.00px;font-size:15.15px;line-height:20px;color:#5089bd;letter-spacing:0.138px;">Edit</span>
<span class="t" style="left:1133.30px;top:199.00px;font-size:15.15px;line-height:20px;color:#5089bd;letter-spacing:0.295px;">Delete</span>
<span class="t" style="left:1209.55px;top:199.00px;font-size:15.15px;line-height:20px;color:#5089bd;letter-spacing:0.231px;">Show </span>
<span class="t" style="left:1252.80px;top:199.00px;font-size:15.15px;line-height:20px;color:#5089bd;letter-spacing:0.431px;">name </span>
<span class="t" style="left:1297.05px;top:199.00px;font-size:15.15px;line-height:20px;color:#5089bd;letter-spacing:0.529px;">first</span>
<span class="t" style="left:841.29px;top:684.00px;font-size:13.7px;line-height:20px;color:#555;transform:scaleX(0.9502);transform-origin:0 0;">Enabled</span>
<span class="t" style="left:848.05px;top:715.00px;font-size:15.05px;line-height:20px;color:#111;letter-spacing:0.055px;">NOT(</span>
<span class="t" style="left:885.05px;top:715.00px;font-size:15.05px;line-height:20px;color:#111;transform:scaleX(0.9569);transform-origin:0 0;">ISEMPTY(</span>
<span class="t" style="left:953.05px;top:715.00px;font-size:15.05px;line-height:20px;color:#111;letter-spacing:0.388px;">model.</span>
<span class="t" style="left:1000.55px;top:715.00px;font-size:15.05px;line-height:20px;color:#111;transform:scaleX(0.9648);transform-origin:0 0;">Batches.</span>
<span class="t" style="left:1057.05px;top:715.00px;font-size:15.05px;line-height:20px;color:#111;letter-spacing:0.560px;">Value))</span>
<span class="t" style="left:841.09px;top:753.00px;font-size:13.7px;line-height:20px;color:#555;transform:scaleX(0.9088);transform-origin:0 0;">File </span>
<span class="t" style="left:864.59px;top:753.00px;font-size:13.7px;line-height:20px;color:#555;letter-spacing:0.062px;">name</span>
<span class="t" style="left:848.05px;top:784.00px;font-size:15.05px;line-height:20px;color:#111;transform:scaleX(0.9244);transform-origin:0 0;">IF(</span>
<span class="t" style="left:865.05px;top:784.00px;font-size:15.05px;line-height:20px;color:#111;letter-spacing:0.388px;">model.</span>
<span class="t" style="left:912.55px;top:784.00px;font-size:15.05px;line-height:20px;color:#111;letter-spacing:0.086px;">Batches.</span>
<span class="t" style="left:971.80px;top:784.00px;font-size:15.05px;line-height:20px;color:#111;transform:scaleX(0.9730);transform-origin:0 0;">Batc...</span>
<div class="b" style="left:0px;top:807.8px;width:1453px;height:1.2px;background:#c9f6f8;"></div>
<div class="b" style="left:0px;top:809px;width:1453px;height:1px;background:#4b98a8;"></div>
<div class="b" style="left:1025.3px;top:727.4px;width:323.4px;height:80.2px;background:#fff;border:1px solid #767676;"></div>
<span class="t" style="left:1032.59px;top:737.00px;font-size:13.7px;line-height:20px;color:#424242;letter-spacing:0.089px;font-weight:bold;">IF(</span>
<span class="t" style="left:1049.59px;top:737.00px;font-size:13.7px;line-height:20px;color:#424242;letter-spacing:-0.062px;font-weight:bold;">model.</span>
<span class="t" style="left:1093.34px;top:737.00px;font-size:13.7px;line-height:20px;color:#424242;font-weight:bold;transform:scaleX(0.9726);transform-origin:0 0;">Batches.</span>
<span class="t" style="left:1148.84px;top:737.00px;font-size:13.7px;line-height:20px;color:#424242;font-weight:bold;transform:scaleX(0.9777);transform-origin:0 0;">BatchNumber</span>
<span class="t" style="left:1236.59px;top:737.00px;font-size:13.7px;line-height:20px;color:#424242;letter-spacing:1.600px;font-weight:bold;">=</span>
<span class="t" style="left:1247.59px;top:737.00px;font-size:13.7px;line-height:20px;color:#424242;letter-spacing:0.010px;font-weight:bold;">1, </span>
<span class="t" style="left:1262.84px;top:737.00px;font-size:13.7px;line-height:20px;color:#424242;font-weight:bold;transform:scaleX(0.9506);transform-origin:0 0;">Fn1 </span>
<span class="t" style="left:1289.59px;top:737.00px;font-size:13.7px;line-height:20px;color:#424242;letter-spacing:1.031px;font-weight:bold;">&amp; </span>
<span class="t" style="left:1305.34px;top:737.00px;font-size:13.7px;line-height:20px;color:#424242;font-weight:bold;transform:scaleX(0.9572);transform-origin:0 0;">Fn2,</span>
<span class="t" style="left:1032.59px;top:760.00px;font-size:13.7px;line-height:20px;color:#424242;font-weight:bold;transform:scaleX(0.9595);transform-origin:0 0;">Fn1 </span>
<span class="t" style="left:1059.59px;top:760.00px;font-size:13.7px;line-height:20px;color:#424242;letter-spacing:1.031px;font-weight:bold;">&amp; </span>
<span class="t" style="left:1075.34px;top:760.00px;font-size:13.7px;line-height:20px;color:#424242;font-weight:bold;transform:scaleX(0.9482);transform-origin:0 0;">TEXT(</span>
<span class="t" style="left:1112.84px;top:760.00px;font-size:13.7px;line-height:20px;color:#424242;letter-spacing:-0.104px;font-weight:bold;">model.</span>
<span class="t" style="left:1156.34px;top:760.00px;font-size:13.7px;line-height:20px;color:#424242;font-weight:bold;transform:scaleX(0.9682);transform-origin:0 0;">Batches.</span>
<span class="t" style="left:1211.59px;top:760.00px;font-size:13.7px;line-height:20px;color:#424242;letter-spacing:0.049px;font-weight:bold;">BatchNumber) </span>
<span class="t" style="left:1310.34px;top:760.00px;font-size:13.7px;line-height:20px;color:#424242;font-weight:bold;">&amp;</span>
<span class="t" style="left:1032.59px;top:783.00px;font-size:13.7px;line-height:20px;color:#424242;font-weight:bold;transform:scaleX(0.9405);transform-origin:0 0;">Fn2)</span>
</div>
</body></html>
